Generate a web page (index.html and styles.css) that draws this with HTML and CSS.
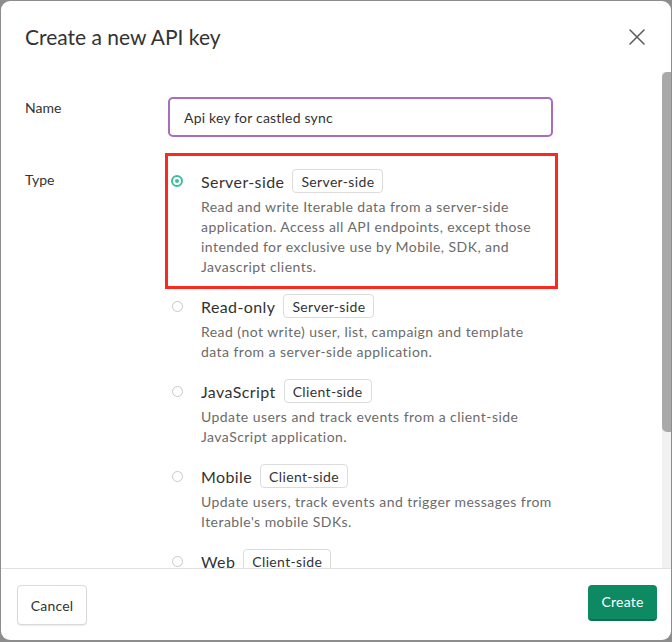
FILE: index.html
```html
<!DOCTYPE html>
<html lang="en">
<head>
<meta charset="utf-8">
<title>Create a new API key</title>
<link rel="stylesheet" href="styles.css">
</head>
<body>
<div class="modal">
  <header class="modal-header">
    <h1 class="modal-title">Create a new API key</h1>
    <button class="close-btn" aria-label="Close">
      <svg width="16" height="16" viewBox="0 0 16 16"><path d="M1 1 L15 15 M15 1 L1 15" stroke="#5a5a5a" stroke-width="1.5" fill="none" stroke-linecap="round"/></svg>
    </button>
  </header>
  <div class="modal-body">
    <div class="form-row name-row">
      <div class="label">Name</div>
      <div class="field">
        <input class="text-input" type="text" value="Api key for castled sync">
      </div>
    </div>
    <div class="form-row">
      <div class="label type-label">Type</div>
      <div class="options">
        <div class="option">
          <div class="option-head">
            <span class="radio checked"></span>
            <span class="option-title">Server-side</span>
            <span class="badge">Server-side</span>
          </div>
          <p class="option-desc">Read and write Iterable data from a server-side application. Access all API endpoints, except those intended for exclusive use by Mobile, SDK, and Javascript clients.</p>
        </div>
        <div class="option">
          <div class="option-head">
            <span class="radio"></span>
            <span class="option-title">Read-only</span>
            <span class="badge">Server-side</span>
          </div>
          <p class="option-desc">Read (not write) user, list, campaign and template data from a server-side application.</p>
        </div>
        <div class="option">
          <div class="option-head">
            <span class="radio"></span>
            <span class="option-title">JavaScript</span>
            <span class="badge">Client-side</span>
          </div>
          <p class="option-desc">Update users and track events from a client-side JavaScript application.</p>
        </div>
        <div class="option">
          <div class="option-head">
            <span class="radio"></span>
            <span class="option-title">Mobile</span>
            <span class="badge">Client-side</span>
          </div>
          <p class="option-desc">Update users, track events and trigger messages from Iterable's mobile SDKs.</p>
        </div>
        <div class="option">
          <div class="option-head">
            <span class="radio"></span>
            <span class="option-title">Web</span>
            <span class="badge">Client-side</span>
          </div>
        </div>
      </div>
    </div>
    <div class="scrollbar"><div class="scroll-thumb"></div></div>
  </div>
  <footer class="modal-footer">
    <button class="btn btn-cancel">Cancel</button>
    <button class="btn btn-create">Create</button>
  </footer>
  <div class="highlight"></div>
</div>
</body>
</html>
```

FILE: styles.css
```css
* { box-sizing: border-box; }
html, body { height: 100%; }
body {
  margin: 0;
  padding: 1px 1px 3px 1px;
  background: #8d8d8d;
  font-family: "Lato", "Liberation Sans", sans-serif;
  color: #333;
}
.modal {
  position: relative;
  width: 670px;
  height: 639px;
  background: #fff;
  border-radius: 9px;
  display: flex;
  flex-direction: column;
  overflow: hidden;
}
.modal-header {
  height: 71px;
  flex: none;
  display: flex;
  align-items: center;
  justify-content: space-between;
  padding: 0 26px 0 24px;
}
.modal-title {
  margin: 0;
  font-size: 21px;
  font-weight: 400;
  color: #333;
}
.close-btn {
  border: 0;
  background: none;
  padding: 0;
  width: 16px;
  height: 16px;
  display: flex;
}
.modal-body {
  position: relative;
  flex: 1;
  overflow: hidden;
  padding: 25px 0 0 24px;
}
.form-row {
  display: grid;
  grid-template-columns: 143px 385px;
}
.name-row { margin-bottom: 32px; }
.label {
  font-size: 14px;
  line-height: 20px;
  padding-top: 1px;
  color: #333;
}
.type-label { padding-top: 1px; }
.text-input {
  width: 385px;
  height: 40px;
  border: 2px solid #a86cc1;
  border-radius: 5px;
  padding: 0 14px;
  font-family: inherit;
  font-size: 14px;
  letter-spacing: 0.2px;
  color: #333;
  outline: none;
}
.options {
  display: flex;
  flex-direction: column;
}
.option { margin-bottom: 17px; }
.option-head {
  display: flex;
  align-items: center;
  height: 24px;
}
.radio {
  width: 11px;
  height: 11px;
  border-radius: 50%;
  border: 1px solid #c8c8c8;
  margin: 0 18px 0 4px;
  flex: none;
  position: relative;
}
.radio.checked {
  border: 2px solid #3cbf9c;
  width: 12px;
  height: 12px;
  margin-left: 3px;
  margin-right: 18px;
}
.radio.checked::after {
  content: "";
  position: absolute;
  left: 2px;
  top: 2px;
  width: 4px;
  height: 4px;
  border-radius: 50%;
  background: #3cbf9c;
}
.option-title {
  font-size: 16px;
  letter-spacing: 0.4px;
  color: #333;
  margin-right: 8px;
}
.badge {
  display: inline-flex;
  align-items: center;
  height: 24px;
  padding: 0 8px;
  border: 1px solid #dcdcdc;
  border-radius: 4px;
  font-size: 14px;
  letter-spacing: 0.35px;
  color: #333;
}
.option-desc {
  margin: 4px 0 0 33px;
  font-size: 14px;
  line-height: 20px;
  letter-spacing: 0.45px;
  color: #6b6b6b;
}
.scrollbar {
  position: absolute;
  right: 0;
  top: 0;
  width: 9px;
  height: 100%;
  background: #f1f1f1;
}
.scroll-thumb {
  width: 9px;
  height: 360px;
  background: #a9a9a9;
  border-radius: 5px 0 0 5px;
}
.modal-footer {
  flex: none;
  height: 72px;
  border-top: 1px solid #e2e2e2;
  display: flex;
  justify-content: space-between;
  align-items: flex-start;
  padding: 16px 14px 0 16px;
}
.btn {
  font-family: inherit;
  font-size: 14px;
  letter-spacing: 0.2px;
  border-radius: 4px;
  cursor: pointer;
}
.btn-cancel {
  width: 70px;
  height: 40px;
  background: #fff;
  border: 1px solid #dadada;
  color: #333;
  box-shadow: 0 1px 1px rgba(0,0,0,0.08);
}
.btn-create {
  width: 69px;
  height: 36px;
  padding-bottom: 2px;
  background: #0e8a63;
  border: 0;
  border-bottom: 2px solid #0a6e4f;
  color: #fff;
}
.highlight {
  position: absolute;
  left: 164px;
  top: 152px;
  width: 393px;
  height: 136px;
  border: 3px solid #fa2a1e;
  pointer-events: none;
}
```
